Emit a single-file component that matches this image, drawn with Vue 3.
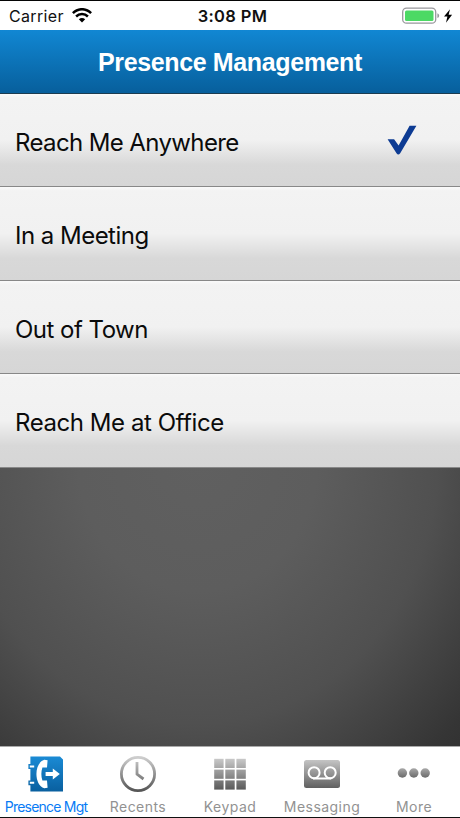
<script setup>
import { ref } from 'vue'

const options = ['Reach Me Anywhere', 'In a Meeting', 'Out of Town', 'Reach Me at Office']
const selected = ref(0)
const tabs = [
  { id: 'presence', label: 'Presence Mgt' },
  { id: 'recents', label: 'Recents' },
  { id: 'keypad', label: 'Keypad' },
  { id: 'messaging', label: 'Messaging' },
  { id: 'more', label: 'More' },
]
const active = ref('presence')
</script>

<template>
  <div class="phone">
    <div class="status">
      <div class="carrier">
        <span>Carrier</span>
        <svg width="20" height="15" viewBox="0 0 20 15" fill="none" stroke="#000" stroke-width="2.5">
          <path d="M0.9 5.1C6.2-.1 13.8-.1 19.1 5.1" />
          <path d="M4.1 8.5C7.4 5.3 12.6 5.3 15.9 8.5" />
          <path d="M6.8 11.3Q10 8.5 13.2 11.3L10 14.5Z" fill="#000" stroke="none" />
        </svg>
      </div>
      <div class="time">3:08 PM</div>
      <div class="power">
        <svg width="52" height="18" viewBox="0 0 52 18">
          <rect x="0.7" y="1.2" width="33" height="15" rx="3.8" fill="#fff" stroke="#98989c" stroke-width="1.3" />
          <rect x="3" y="3.5" width="28.5" height="10.5" rx="1.5" fill="#4cd964" />
          <path d="M35.4 6.3Q37.2 7 37.2 8.7T35.4 11.1Z" fill="#98989c" />
          <path d="M48 2.2L42 9.5H45.4L44 15.7L50.1 7.8H46.6Z" fill="#000" />
        </svg>
      </div>
    </div>
    <header class="header"><h1>Presence Management</h1></header>
    <main class="content">
      <div v-for="(o, i) in options" :key="o" class="row" @click="selected = i">
        <span class="label">{{ o }}</span>
        <svg v-if="selected === i" class="check" width="30" height="30" viewBox="0 0 30 30">
          <path d="M0.6 14.2H7.1L11.6 20.4L22.6 0.7H29.4L13.2 28.2Q11.2 31 9.5 28.2Z" fill="#0d3b93" />
        </svg>
      </div>
    </main>
    <nav class="tabs">
      <button v-for="t in tabs" :key="t.id" class="tab" :class="[t.id, { active: active === t.id }]" @click="active = t.id">
        <svg width="40" height="40" viewBox="0 0 40 40">
          <defs>
            <linearGradient :id="'fill-' + t.id" gradientUnits="userSpaceOnUse" x1="0" y1="3" x2="0" y2="37">
              <stop offset="0" :stop-color="t.id === 'presence' ? '#1a8ad4' : '#cfcfcf'" />
              <stop offset="1" :stop-color="t.id === 'presence' ? '#0960a0' : '#555'" />
            </linearGradient>
            <linearGradient id="dots" x1="0" y1="0" x2="0" y2="1">
              <stop offset="0" stop-color="#a8a8a8" />
              <stop offset="1" stop-color="#6b6b6b" />
            </linearGradient>
          </defs>
          <g v-if="t.id === 'presence'">
            <path d="M4.4 2.5H34L37 5.5V37.5H4.4V31.2H2.4V26.4H4.4V14.9H2.4V10.1H4.4Z" fill="url(#fill-presence)" />
            <path d="M3.8 12.5H8.2M3.8 28.8H8.2" stroke="#fff" stroke-width="2" />
            <path d="M18.3 5.8C7.8 9 7.8 31 18.3 34.3L21.6 33.8L21 26.6L16.4 26.4C15 22 15 18 16.4 13.6L21 13.4L21.6 6.2Z" fill="#fff" />
            <path d="M19.6 17.9H26.8V14.6L33.8 20L26.8 25.4V22.1H19.6Z" fill="#fff" />
          </g>
          <g v-else-if="t.id === 'recents'" fill="none" stroke="url(#fill-recents)">
            <circle cx="20" cy="20" r="16.6" stroke-width="2.8" />
            <path d="M19 8V20.2L25.5 25" stroke-width="2.8" stroke-linejoin="round" />
          </g>
          <g v-else-if="t.id === 'keypad'" fill="url(#fill-keypad)">
            <template v-for="r in 3" :key="r">
              <rect v-for="c in 3" :key="c" :x="4.2 + (c - 1) * 11.1" :y="4.8 + (r - 1) * 10.8" width="9.4" height="9.2" />
            </template>
          </g>
          <g v-else-if="t.id === 'messaging'">
            <rect x="2" y="6" width="36" height="28" rx="2.5" fill="url(#fill-messaging)" />
            <g fill="none" stroke="#fff" stroke-width="2">
              <circle cx="12.1" cy="18.7" r="5.5" />
              <circle cx="28.2" cy="18.7" r="5.5" />
              <path d="M11 24.5H29.3" />
            </g>
          </g>
          <g v-else fill="url(#dots)">
            <circle cx="8.4" cy="19" r="4.7" />
            <circle cx="19.8" cy="19" r="4.7" />
            <circle cx="31.2" cy="19" r="4.7" />
          </g>
        </svg>
        <span class="caption">{{ t.label }}</span>
      </button>
    </nav>
  </div>
</template>

<style>
body { margin: 0; }
</style>

<style scoped>
.phone {
  box-sizing: border-box;
  width: 460px;
  height: 818px;
  display: flex;
  flex-direction: column;
  overflow: hidden;
  border-top: 1px solid #050505;
  border-bottom: 1px solid #111;
  background: #fff;
  font-family: Inter, sans-serif;
}
.status {
  height: 29px;
  flex: none;
  display: grid;
  grid-template-columns: 1fr auto 1fr;
  align-items: center;
  padding: 0 6px 0 9px;
  color: #111;
  font-size: 16px;
}
.carrier { display: flex; align-items: center; gap: 8px; letter-spacing: 0.35px; }
.time { font-weight: 600; font-size: 16.5px; letter-spacing: 0.35px; padding-left: 2px; }
.power { display: flex; justify-content: flex-end; }
.header {
  box-sizing: border-box;
  height: 64px;
  flex: none;
  display: flex;
  align-items: center;
  justify-content: center;
  border-bottom: 1px solid #1c3c50;
  background: linear-gradient(#1187d3, #075f9c);
}
h1 {
  margin: 0;
  color: #fff;
  font: bold 25px/30px "Liberation Sans", sans-serif;
  letter-spacing: -0.37px;
}
.content {
  flex: 1;
  background: radial-gradient(ellipse 400px 440px at 43% 56%, #606060 0%, #5d5d5d 30%, #505050 60%, #353535 88%, #2e2e2e 100%);
}
.row {
  box-sizing: border-box;
  height: 93.4px;
  display: flex;
  align-items: center;
  justify-content: space-between;
  padding: 5.6px 43px 0 15px;
  border-bottom: 1px solid #888;
  background: linear-gradient(#fafafa 0, #f3f3f3 4%, #f1f1f1 50%, #d8d8d8 77%, #d6d6d6 100%);
}
.label { color: #0b0b0b; font-size: 24px; line-height: 30px; letter-spacing: -0.62px; }
.row:nth-child(2) .label, .row:nth-child(3) .label { letter-spacing: -0.52px; }
.row:nth-child(4) .label { letter-spacing: -0.44px; }
.check { margin-bottom: 6px; }
.tabs {
  box-sizing: border-box;
  height: 71px;
  flex: none;
  display: grid;
  grid-template-columns: repeat(5, 92px);
  border-top: 1px solid #aaa;
  background: #fff;
}
.tab {
  display: flex;
  flex-direction: column;
  align-items: center;
  padding: 7px 0 0;
  border: 0;
  background: none;
  color: #929292;
  font-family: inherit;
}
.tab svg { flex: none; }
.caption { margin-top: 4px; font-size: 14px; line-height: 18px; letter-spacing: 0.45px; white-space: nowrap; }
.active .caption { color: #087bf5; letter-spacing: -0.78px; }
</style>
